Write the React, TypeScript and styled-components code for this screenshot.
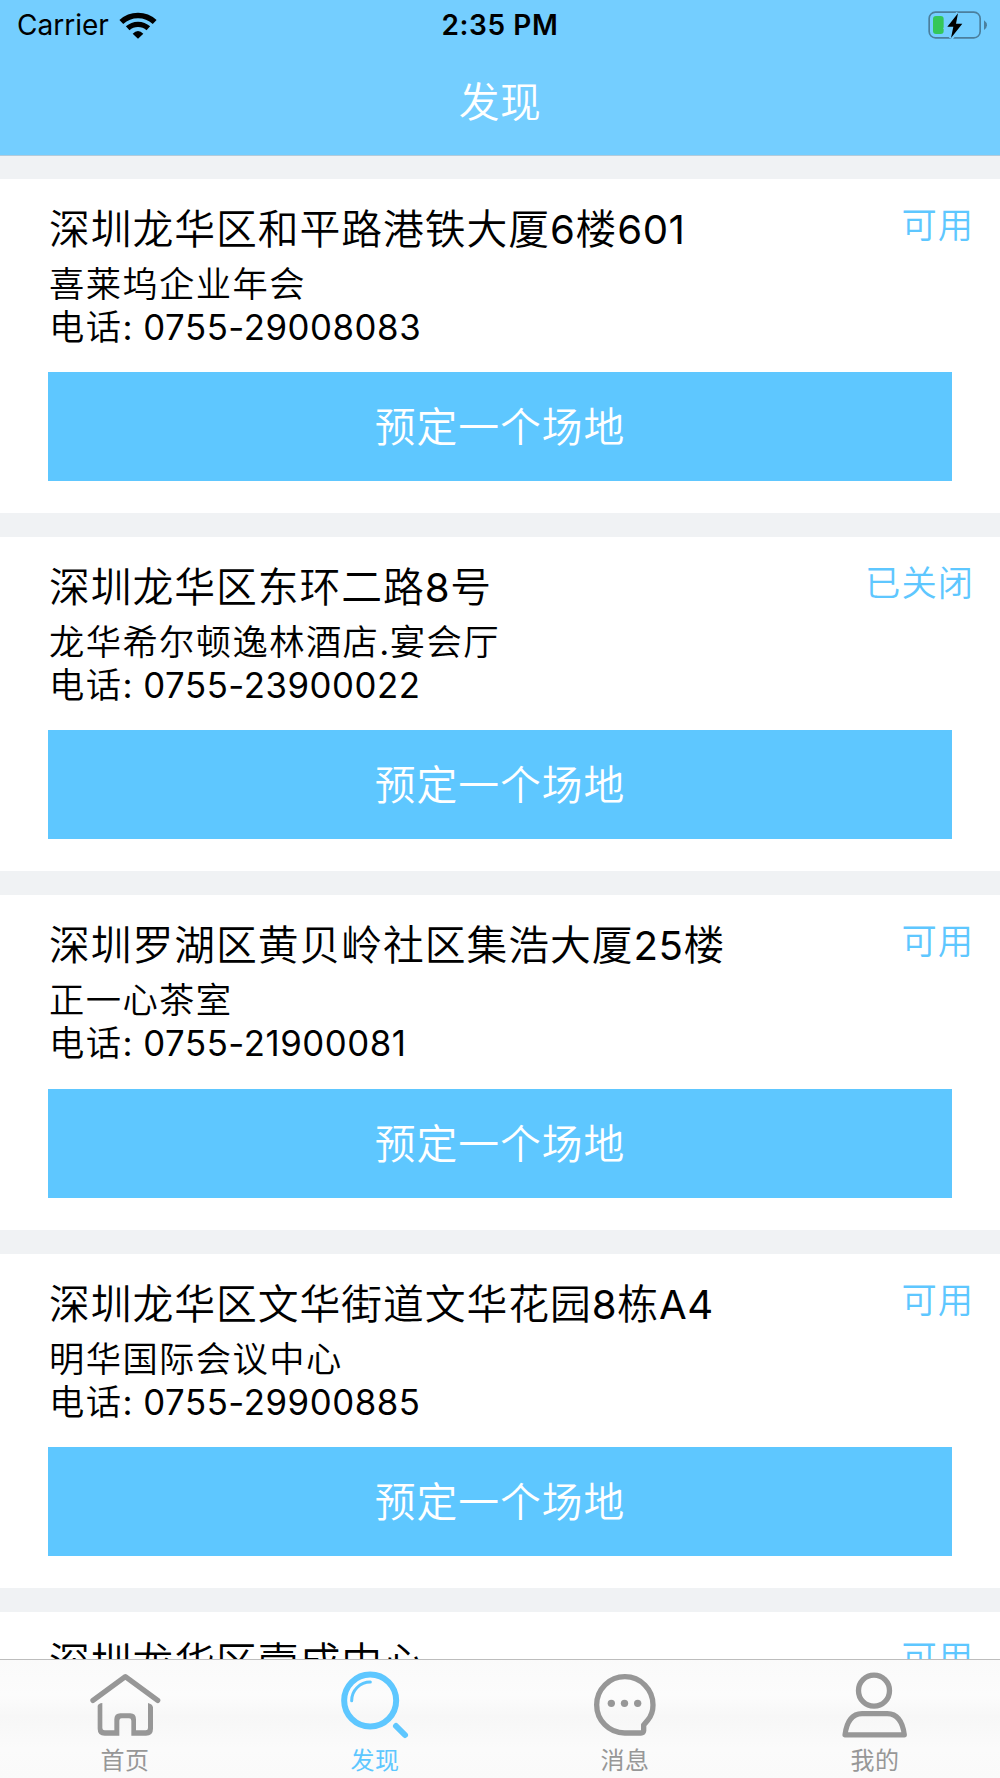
import React from "react";
import styled, { createGlobalStyle } from "styled-components";

const accent = "#5ec7ff";
const bar = "#74ceff";
const muted = "#979797";

const GlobalStyle = createGlobalStyle`
  * { box-sizing: border-box; }
  body { margin: 0; background: #f0f2f4; }
`;

const Screen = styled.div`
  width: 1000px;
  height: 1778px;
  display: flex;
  flex-direction: column;
  overflow: hidden;
  background: #f0f2f4;
  color: #000;
  font-family: Inter, "Noto Sans CJK SC", sans-serif;
  font-weight: 400;
`;

const Header = styled.header`
  flex: none;
  height: 156px;
  background: ${bar};
  border-bottom: 1px solid #b3cbdb;
`;

const StatusBar = styled.div`
  height: 52px;
  display: grid;
  grid-template-columns: 1fr auto 1fr;
  align-items: center;
  padding: 0 12px 2px;
`;

const Carrier = styled.div`
  display: flex;
  align-items: center;
  gap: 10px;
  padding-left: 5px;
  font-size: 28px;
  line-height: 50px;
`;

const Clock = styled.div`
  font-size: 28px;
  font-weight: 600;
  line-height: 50px;
  letter-spacing: 0.6px;
`;

const BatterySlot = styled.div`
  display: flex;
  justify-content: flex-end;
`;

const NavTitle = styled.h1`
  margin: 25px 0 0;
  text-align: center;
  font-size: 40.8px;
  font-weight: 350;
  line-height: 50px;
  letter-spacing: 0.4px;
  color: #fff;
`;

const List = styled.main`
  flex: 1;
  min-height: 0;
  overflow: hidden;
  display: flex;
  flex-direction: column;
  gap: 24px;
  padding-top: 22.67px;
`;

const Card = styled.article`
  flex: none;
  height: 334.33px;
  padding: 25px 26px 0 48px;
  background: #fff;
`;

const TitleRow = styled.div`
  display: flex;
  justify-content: space-between;
  padding-left: 1px;
`;

const Address = styled.h2`
  margin: 0;
  font-size: 40.8px;
  font-weight: 350;
  line-height: 50px;
  letter-spacing: 0.95px;
`;

const State = styled.span`
  font-size: 35.3px;
  font-weight: 350;
  line-height: 43px;
  letter-spacing: 1px;
  color: ${accent};
`;

const Detail = styled.p<{ $first?: boolean }>`
  margin: ${(p) => (p.$first ? "9px 0 0" : "0")};
  padding-left: 1px;
  font-size: 35.3px;
  font-weight: 350;
  line-height: 43px;
  letter-spacing: 1.4px;
`;

const Latin = styled.span`
  font-size: 0.985em;
  font-weight: 400;
  line-height: 0;
  letter-spacing: 0.55px;
`;

const BookButton = styled.button`
  display: block;
  width: 904px;
  height: 109px;
  margin: 23.3px 0 0;
  padding: 1px 0 0;
  border: 0;
  background: ${accent};
  color: #fff;
  font-family: inherit;
  font-size: 40.8px;
  font-weight: 350;
  line-height: 109px;
  letter-spacing: 0.95px;
  text-align: center;
`;

const TabBar = styled.nav`
  flex: none;
  height: 119px;
  display: grid;
  grid-template-columns: repeat(4, 1fr);
  border-top: 1px solid #bdbdbd;
  background: linear-gradient(#fafafa, #fcfcfc 30%, #f7f7f7 48%, #fbfbfb 75%, #fafafa);
`;

const Tab = styled.a<{ $active?: boolean }>`
  display: flex;
  flex-direction: column;
  align-items: center;
  padding-top: 8px;
  color: ${(p) => (p.$active ? accent : muted)};
`;

const TabIcon = styled.svg`
  display: block;
  width: 80px;
  height: 75px;
  fill: none;
  stroke: currentColor;
  stroke-width: 16;
  stroke-linecap: round;
  stroke-linejoin: round;
`;

const TabLabel = styled.span`
  font-size: 24px;
  line-height: 36px;
  letter-spacing: 0.6px;
`;

const WifiIcon = () => (
  <svg width="38" height="28" viewBox="359 28 114 84">
    <g fill="none" stroke="#000">
      <path d="M366 61A74 74 0 0 1 466 61" strokeWidth="17" />
      <path d="M385 80A46 46 0 0 1 447 80" strokeWidth="16" />
    </g>
    <path d="M400 96Q416 80 432 96L416 111Z" />
  </svg>
);

const BatteryIcon = () => (
  <svg width="60" height="28" viewBox="1284 30 180 84">
    <rect x="1287.5" y="33.5" width="153" height="77" rx="19" fill="none" stroke="#4b7f9d" strokeWidth="5" />
    <path d="M1452 58Q1461 65 1461 72.5T1452 87Z" fill="#4b7f9d" />
    <rect x="1299" y="45" width="32" height="54" rx="9" fill="#34c759" />
    <path
      d="M1374 37L1342 77H1360L1353 111L1387 68H1368Z"
      stroke={bar}
      strokeWidth="13"
      fill={bar}
    />
    <path d="M1374 37L1342 77H1360L1353 111L1387 68H1368Z" />
  </svg>
);

const HomeIcon = () => (
  <TabIcon viewBox="255 264 240 225">
    <path d="M279 361L376 290L473 361" />
    <path
      d="M293 378Q295 370 307 369V444Q307 451 314 451H343V418Q343 400 361 400H391Q408 400 408 418V451H437Q444 451 444 444V369Q457 372 459 382V446Q459 467 438 467H394V422Q394 415 387 415H365Q358 415 358 422V467H314Q293 467 293 446Z"
      fill="currentColor"
      stroke="none"
    />
  </TabIcon>
);

const SearchIcon = () => (
  <TabIcon viewBox="1005 264 240 225">
    <circle cx="1110.5" cy="361.5" r="78" strokeWidth="18" />
    <path d="M1055 362A56 56 0 0 1 1111 306" strokeWidth="9" />
    <path d="M1188 438L1215 465" strokeWidth="18" />
  </TabIcon>
);

const MessageIcon = () => (
  <TabIcon viewBox="255 264 240 225">
    <path d="M374 459A84.5 84.5 0 1 1 459 375Q459 402 443 421L431 435V452Q430 459 423 459Z" />
    <g fill="currentColor" stroke="none">
      <circle cx="334" cy="370" r="11" />
      <circle cx="373.5" cy="370" r="11" />
      <circle cx="413" cy="370" r="11" />
    </g>
  </TabIcon>
);

const PersonIcon = () => (
  <TabIcon viewBox="1005 264 240 225">
    <circle cx="1122" cy="332" r="46.5" />
    <path d="M1035 464.5H1213Q1205 402 1162 401H1086Q1043 402 1035 464.5Z" strokeWidth="15.5" />
  </TabIcon>
);

const venues = [
  { address: "深圳龙华区和平路港铁大厦6楼601", name: "喜莱坞企业年会", phone: "0755-29008083", state: "可用" },
  { address: "深圳龙华区东环二路8号", name: "龙华希尔顿逸林酒店.宴会厅", phone: "0755-23900022", state: "已关闭" },
  { address: "深圳罗湖区黄贝岭社区集浩大厦25楼", name: "正一心茶室", phone: "0755-21900081", state: "可用" },
  { address: "深圳龙华区文华街道文华花园8栋A4", name: "明华国际会议中心", phone: "0755-29900885", state: "可用" },
  { address: "深圳龙华区壹成中心", name: "", phone: "", state: "可用" },
];

const tabs = [
  { label: "首页", Icon: HomeIcon },
  { label: "发现", Icon: SearchIcon, active: true },
  { label: "消息", Icon: MessageIcon },
  { label: "我的", Icon: PersonIcon },
];

const Mixed = ({ text }: { text: string }) => (
  <>
    {text.split(/([0-9A-Za-z.]+)/).map((part, i) => (i % 2 ? <Latin key={i}>{part}</Latin> : part))}
  </>
);

export default function App() {
  return (
    <Screen lang="zh-CN">
      <GlobalStyle />
      <Header>
        <StatusBar>
          <Carrier>
            Carrier
            <WifiIcon />
          </Carrier>
          <Clock>2:35 PM</Clock>
          <BatterySlot>
            <BatteryIcon />
          </BatterySlot>
        </StatusBar>
        <NavTitle>发现</NavTitle>
      </Header>
      <List>
        {venues.map((v) => (
          <Card key={v.address}>
            <TitleRow>
              <Address>
                <Mixed text={v.address} />
              </Address>
              <State>{v.state}</State>
            </TitleRow>
            {v.name && (
              <>
                <Detail $first>
                  <Mixed text={v.name} />
                </Detail>
                <Detail>
                  电话<Latin>: {v.phone}</Latin>
                </Detail>
                <BookButton>预定一个场地</BookButton>
              </>
            )}
          </Card>
        ))}
      </List>
      <TabBar>
        {tabs.map(({ label, Icon, active }) => (
          <Tab key={label} $active={active}>
            <Icon />
            <TabLabel>{label}</TabLabel>
          </Tab>
        ))}
      </TabBar>
    </Screen>
  );
}
